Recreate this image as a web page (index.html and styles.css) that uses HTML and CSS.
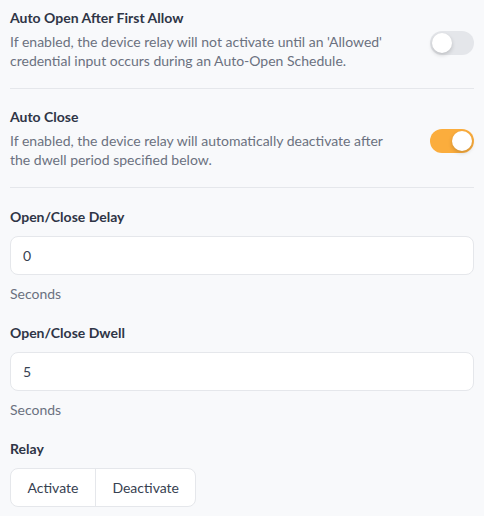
FILE: index.html
```html
<!DOCTYPE html>
<html lang="en">
<head>
    <meta charset="UTF-8">
    <meta name="viewport" content="width=device-width, initial-scale=1.0">
    <title>Relay Settings</title>
    <link rel="stylesheet" href="styles.css">
</head>
<body>
    <div class="settings">
        <div class="setting-row first">
            <div class="setting-text">
                <div class="setting-title">Auto Open After First Allow</div>
                <div class="setting-desc">If enabled, the device relay will not activate until an 'Allowed' credential input occurs during an Auto-Open Schedule.</div>
            </div>
            <div class="toggle"><span class="knob"></span></div>
        </div>

        <div class="divider"></div>

        <div class="setting-row">
            <div class="setting-text">
                <div class="setting-title">Auto Close</div>
                <div class="setting-desc">If enabled, the device relay will automatically deactivate after the dwell period specified below.</div>
            </div>
            <div class="toggle on"><span class="knob"></span></div>
        </div>

        <div class="divider"></div>

        <div class="fields">
            <div class="field">
                <label class="field-label" for="delay">Open/Close Delay</label>
                <input class="field-input" id="delay" type="text" value="0">
                <div class="field-hint">Seconds</div>
            </div>

            <div class="field">
                <label class="field-label" for="dwell">Open/Close Dwell</label>
                <input class="field-input" id="dwell" type="text" value="5">
                <div class="field-hint">Seconds</div>
            </div>

            <div class="field">
                <div class="field-label">Relay</div>
                <div class="btn-group">
                    <button class="btn">Activate</button>
                    <button class="btn">Deactivate</button>
                </div>
            </div>
        </div>
    </div>
</body>
</html>
```

FILE: styles.css
```css
body {
    font-family: 'Lato', 'Noto Sans', sans-serif;
    background-color: #f8f9fb;
    margin: 0;
    padding: 0;
    color: #2f3546;
    font-size: 14px;
}

.settings {
    padding: 0 10px;
}

.setting-row {
    display: flex;
    align-items: flex-start;
    padding: 18px 0;
}

.setting-row.first {
    padding-top: 8px;
}

.setting-text {
    width: 380px;
}

.setting-title {
    font-weight: 700;
    line-height: 20px;
    color: #2f3546;
}

.setting-desc {
    margin-top: 4px;
    line-height: 19px;
    color: #6b7180;
}

.toggle {
    margin-left: auto;
    margin-top: 23px;
    width: 44px;
    height: 24px;
    border-radius: 12px;
    background-color: #e4e6ea;
    position: relative;
    flex-shrink: 0;
}

.setting-row:not(.first) .toggle {
    margin-top: 22px;
}

.toggle .knob {
    position: absolute;
    top: 2px;
    left: 2px;
    width: 20px;
    height: 20px;
    border-radius: 50%;
    background-color: #fff;
    box-shadow: 0 2px 4px rgba(0, 0, 0, 0.18);
}

.toggle.on {
    background-color: #fbad3d;
}

.toggle.on .knob {
    left: 22px;
}

.divider {
    height: 1px;
    background-color: #e5e7eb;
}

.fields {
    padding-top: 19px;
}

.field {
    margin-bottom: 19px;
}

.field-label {
    display: block;
    font-weight: 700;
    line-height: 20px;
    color: #2f3546;
}

.field-input {
    display: block;
    box-sizing: border-box;
    width: 100%;
    height: 39px;
    margin-top: 9px;
    padding: 0 12px;
    border: 1px solid #e5e7eb;
    border-radius: 8px;
    background-color: #fff;
    font-family: inherit;
    font-size: 14px;
    color: #374151;
    outline: none;
}

.field-hint {
    margin-top: 9px;
    line-height: 20px;
    color: #6b7180;
}

.btn-group {
    display: inline-flex;
    margin-top: 9px;
    border: 1px solid #e5e7eb;
    border-radius: 8px;
    background-color: #fff;
    overflow: hidden;
}

.btn {
    height: 37px;
    padding: 0 16.5px;
    border: none;
    background: none;
    font-family: inherit;
    font-size: 14px;
    color: #374151;
    cursor: pointer;
}

.btn + .btn {
    border-left: 1px solid #e5e7eb;
}
```
